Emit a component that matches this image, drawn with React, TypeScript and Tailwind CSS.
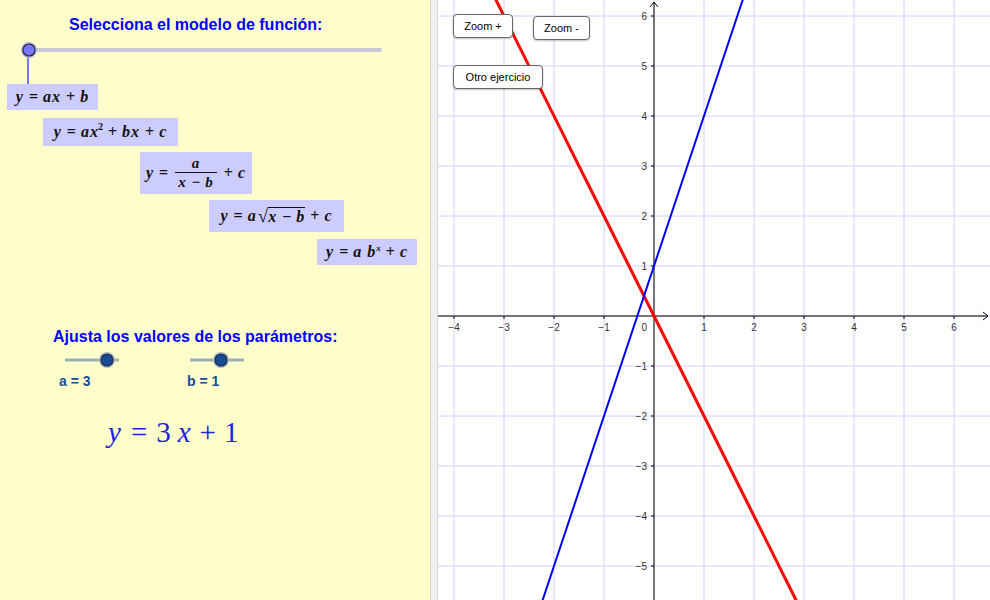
import React from "react";

const OX = 216;
const OY = 316;
const U = 50;
const GW = 552;
const GH = 600;

const px = (x: number) => OX + x * U;
const py = (y: number) => OY - y * U;

const Graph = () => {
  const xs: number[] = [];
  for (let i = -4; i <= 6; i++) xs.push(i);
  const ys: number[] = [];
  for (let i = -5; i <= 6; i++) ys.push(i);
  const yTop = (OY + 10) / U;
  const yBot = -(GH - OY + 10) / U;
  return (
    <svg width={GW} height={GH} className="block">
      {xs.map((i) => (
        <line key={"gx" + i} x1={px(i)} y1={0} x2={px(i)} y2={GH} stroke="#d2d2fa" strokeWidth={1} />
      ))}
      {ys.map((i) => (
        <line key={"gy" + i} x1={0} y1={py(i)} x2={GW} y2={py(i)} stroke="#d2d2fa" strokeWidth={1} />
      ))}
      <line x1={0} y1={OY} x2={GW - 2} y2={OY} stroke="#000" strokeWidth={1} />
      <line x1={OX} y1={2} x2={OX} y2={GH} stroke="#000" strokeWidth={1} />
      <path d={`M${GW - 7} ${OY - 4} L${GW - 2} ${OY} L${GW - 7} ${OY + 4}`} fill="none" stroke="#000" strokeWidth={1} />
      <path d={`M${OX - 4} 7 L${OX} 2 L${OX + 4} 7`} fill="none" stroke="#000" strokeWidth={1} />
      {xs.filter((i) => i !== 0).map((i) => (
        <g key={"tx" + i}>
          <line x1={px(i)} y1={OY} x2={px(i)} y2={OY + 3} stroke="#000" strokeWidth={1} />
          <text x={px(i)} y={OY + 15} fontSize={10} fill="#333" textAnchor="middle" fontFamily="Liberation Sans, Arial, sans-serif">
            {i < 0 ? "\u2212" + -i : i}
          </text>
        </g>
      ))}
      {ys.filter((i) => i !== 0).map((i) => (
        <g key={"ty" + i}>
          <line x1={OX - 3} y1={py(i)} x2={OX} y2={py(i)} stroke="#000" strokeWidth={1} />
          <text x={OX - 7} y={py(i) + 4} fontSize={10} fill="#333" textAnchor="end" fontFamily="Liberation Sans, Arial, sans-serif">
            {i < 0 ? "\u2212" + -i : i}
          </text>
        </g>
      ))}
      <text x={OX - 7} y={OY + 15} fontSize={10} fill="#333" textAnchor="end" fontFamily="Liberation Sans, Arial, sans-serif">
        0
      </text>
      <line x1={px(yTop / -2)} y1={py(yTop)} x2={px(yBot / -2)} y2={py(yBot)} stroke="#ff0000" strokeWidth={3} />
      <line x1={px((yTop - 1) / 3)} y1={py(yTop)} x2={px((yBot - 1) / 3)} y2={py(yBot)} stroke="#0000ff" strokeWidth={2} />
    </svg>
  );
};

const I = ({ children }: { children: React.ReactNode }) => <span className="italic tracking-[1px]">{children}</span>;
const Op = ({ children }: { children: React.ReactNode }) => <span className="not-italic mx-[5px]">{children}</span>;

const Box = ({ className, children }: { className: string; children: React.ReactNode }) => (
  <div
    className={
      "flex items-center justify-center bg-[#ccccff] text-[16px] font-bold text-[#111] [font-family:'Liberation_Serif','Times_New_Roman',serif] " +
      className
    }
  >
    {children}
  </div>
);

const SmallSlider = ({ pos }: { pos: number }) => (
  <svg width={60} height={16} className="block">
    <line x1={2} y1={8} x2={56} y2={8} stroke="#99b3b3" strokeWidth={3} />
    <circle cx={pos} cy={8} r={8} fill="#b0bcc8" />
    <circle cx={pos} cy={8} r={6} fill="#1a4b99" stroke="#1e2a40" strokeWidth={1.2} />
  </svg>
);

const Btn = ({ className, children }: { className: string; children: React.ReactNode }) => (
  <div
    className={
      "absolute flex items-center justify-center rounded-[4px] border border-[#666] bg-white text-[11px] text-black shadow-[0_1px_2px_rgba(0,0,0,0.25)] [font-family:'Liberation_Sans',Arial,sans-serif] " +
      className
    }
  >
    {children}
  </div>
);

export default function App() {
  return (
    <div className="flex w-[990px] h-[600px] overflow-hidden bg-white [font-family:'Liberation_Sans',Arial,sans-serif]">
      <div className="w-[430px] h-full bg-[#ffffcc] flex flex-col">
        <div className="pt-[16px] pl-[69px] text-[16px] leading-[18px] font-bold text-[#0000ff]">
          Selecciona el modelo de función:
        </div>
        <svg width={430} height={50} className="block">
          <line x1={29} y1={16} x2={380} y2={16} stroke="#c8c8d8" strokeWidth={4} strokeLinecap="round" />
          <line x1={28} y1={16} x2={28} y2={50} stroke="#7777ff" strokeWidth={2} />
          <circle cx={29} cy={16} r={8} fill="#b8b8e0" />
          <circle cx={29} cy={16} r={6} fill="#7777ff" stroke="#222" strokeWidth={1.2} />
        </svg>
        <Box className="ml-[7px] w-[91px] h-[26px]">
          <I>y</I>
          <Op>=</Op>
          <I>ax</I>
          <Op>+</Op>
          <I>b</I>
        </Box>
        <Box className="mt-[8px] ml-[43px] w-[135px] h-[28px]">
          <I>y</I>
          <Op>=</Op>
          <I>ax</I>
          <sup className="text-[10px] -ml-[1px]">2</sup>
          <Op>+</Op>
          <I>bx</I>
          <Op>+</Op>
          <I>c</I>
        </Box>
        <Box className="mt-[6px] ml-[140px] w-[112px] h-[42px]">
          <I>y</I>
          <Op>=</Op>
          <span className="inline-flex flex-col items-center mx-[2px] text-[15px] leading-[17px]">
            <I>a</I>
            <span className="border-t border-[#111] px-[3px] pt-[1px]">
              <I>x</I>
              <Op>−</Op>
              <I>b</I>
            </span>
          </span>
          <Op>+</Op>
          <I>c</I>
        </Box>
        <Box className="mt-[6px] ml-[209px] w-[135px] h-[32px]">
          <I>y</I>
          <Op>=</Op>
          <I>a</I>
          <span className="not-italic ml-[1px] text-[19px] font-normal">√</span>
          <span className="border-t border-[#111] leading-[18px]">
            <I>x</I>
            <Op>−</Op>
            <I>b</I>
          </span>
          <Op>+</Op>
          <I>c</I>
        </Box>
        <Box className="mt-[7px] ml-[317px] w-[100px] h-[26px]">
          <I>y</I>
          <Op>=</Op>
          <I>a</I>
          <span className="ml-[5px]">
            <I>b</I>
          </span>
          <sup className="text-[9px] italic">x</sup>
          <Op>+</Op>
          <I>c</I>
        </Box>
        <div className="mt-[63px] pl-[53px] text-[16px] leading-[18px] font-bold text-[#0000ff]">
          Ajusta los valores de los parámetros:
        </div>
        <div className="mt-[6px] flex">
          <div className="ml-[63px] w-[125px] flex flex-col">
            <SmallSlider pos={44} />
            <div className="mt-[5px] -ml-[4px] text-[14px] leading-[16px] font-bold text-[#1a4b99]">a = 3</div>
          </div>
          <div className="flex flex-col">
            <SmallSlider pos={33} />
            <div className="mt-[5px] -ml-[1px] text-[14px] leading-[16px] font-bold text-[#1a4b99]">b = 1</div>
          </div>
        </div>
        <div className="mt-[27px] pl-[108px] text-[29px] leading-[32px] text-[#2020e0] [font-family:'Liberation_Serif','Times_New_Roman',serif]">
          <I>y</I>
          <span className="mx-[9px]">=</span>
          <span>3</span>
          <span className="ml-[7px]">
            <I>x</I>
          </span>
          <span className="mx-[8px]">+</span>
          <span>1</span>
        </div>
      </div>
      <div className="w-[8px] h-full bg-[#f0f0f0] border-l border-r border-[#d6d6d6]" />
      <div className="relative w-[552px] h-full">
        <Graph />
        <Btn className="left-[15px] top-[14px] w-[60px] h-[24px]">Zoom +</Btn>
        <Btn className="left-[95px] top-[16px] w-[57px] h-[24px]">Zoom -</Btn>
        <Btn className="left-[15px] top-[65px] w-[90px] h-[24px]">Otro ejercicio</Btn>
      </div>
    </div>
  );
}
